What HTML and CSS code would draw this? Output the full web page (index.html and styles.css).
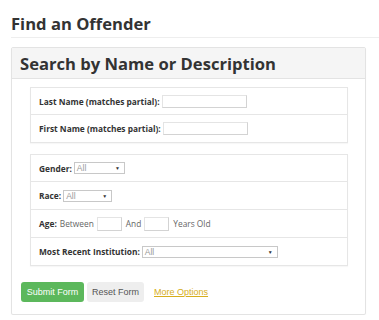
FILE: index.html
```html
<!DOCTYPE html>
<html>
<head>
<meta charset="utf-8">
<link rel="stylesheet" href="styles.css">
</head>
<body>
<div class="page">
  <h1 class="title">Find an Offender</h1>
  <hr class="rule">
  <div class="panel">
    <div class="panel-head">Search by Name or Description</div>
    <div class="panel-body">
      <div class="box">
        <div class="row"><span class="lbl">Last Name (matches partial):</span><span class="input w84"></span></div>
        <div class="row"><span class="lbl">First Name (matches partial):</span><span class="input w84"></span></div>
      </div>
      <div class="box">
        <div class="row"><span class="lbl">Gender:</span><span class="select w51"><span>All</span><span class="arr">▼</span></span></div>
        <div class="row"><span class="lbl">Race:</span><span class="select w49"><span>All</span><span class="arr">▼</span></span></div>
        <div class="row"><span class="lbl">Age:</span><span class="txt">Between</span><span class="input w25"></span><span class="txt">And</span><span class="input w25"></span><span class="txt">Years Old</span></div>
        <div class="row"><span class="lbl">Most Recent Institution:</span><span class="select w136"><span>All</span><span class="arr">▼</span></span></div>
      </div>
      <div class="actions">
        <span class="btn btn-submit">Submit Form</span>
        <span class="btn btn-reset">Reset Form</span>
        <a class="more" href="#">More Options</a>
      </div>
    </div>
  </div>
</div>
</body>
</html>
```
FILE: styles.css
```css
html, body { margin: 0; padding: 0; background: #fff; }
body { font-family: "Open Sans", "Liberation Sans", sans-serif; color: #333; }
.page { padding: 13px 0 0 11px; }
.title { margin: 0; font-size: 16.6px; line-height: 21px; font-weight: 700; color: #333; }
.rule { margin: 3px 0 0 0; border: 0; border-top: 1px solid #eee; height: 0; }
.panel { margin: 9px 13px 0 0; border: 1px solid #e3e3e3; border-radius: 2px; box-shadow: 0 1px 1px rgba(0,0,0,0.06); }
.panel-head { background: #f5f5f5; border-bottom: 1px solid #e3e3e3; height: 30px; display: flex; align-items: center; padding-left: 8px; font-size: 16.6px; font-weight: 700; color: #333; }
.panel-body { padding: 8px 17px 12px 18px; }
.box { border: 1px solid #e6e6e6; box-shadow: 0 1px 1px rgba(0,0,0,0.03); margin-bottom: 11px; }
.row { height: 27px; display: flex; align-items: center; padding-left: 8px; font-size: 8.35px; border-top: 1px solid #e6e6e6; white-space: nowrap; }
.row:first-child { border-top: 0; height: 26px; }
.lbl { font-weight: 700; color: #333; margin-right: 2px; }
.txt { color: #666; margin: 0 3px 0 1px; }
.input { display: inline-block; height: 12px; border: 1px solid #d3d3d3; border-top-color: #e4e4e4; border-left-color: #e4e4e4; box-sizing: border-box; background: #fff; }
.w84 { width: 85px; height: 13px; }
.w25 { width: 25px; height: 14px; margin-right: 3px; }
.select { display: inline-flex; align-items: center; justify-content: space-between; height: 12px; border: 1px solid #c8c8c8; box-sizing: border-box; padding: 0 4px 0 2px; font-family: "Liberation Sans", sans-serif; font-size: 8.5px; color: #999; background: #fff; }
.arr { font-size: 5px; color: #333; }
.w51 { width: 51px; }
.w49 { width: 49px; }
.w136 { width: 136px; }
.actions { display: flex; align-items: center; margin-top: 16px; margin-left: -9px; }
.btn { display: inline-flex; align-items: center; justify-content: center; height: 20px; font-family: "Liberation Sans", sans-serif; font-size: 9px; border-radius: 3px; box-sizing: border-box; white-space: nowrap; }
.btn-submit { background: #5cb85c; color: #fff; width: 63px; }
.btn-reset { background: #eeeeee; color: #555; margin-left: 3px; width: 57px; }
.more { margin-left: 10px; font-family: "Liberation Sans", sans-serif; font-size: 9px; color: #d6ad1c; text-decoration: underline; white-space: nowrap; }
```
